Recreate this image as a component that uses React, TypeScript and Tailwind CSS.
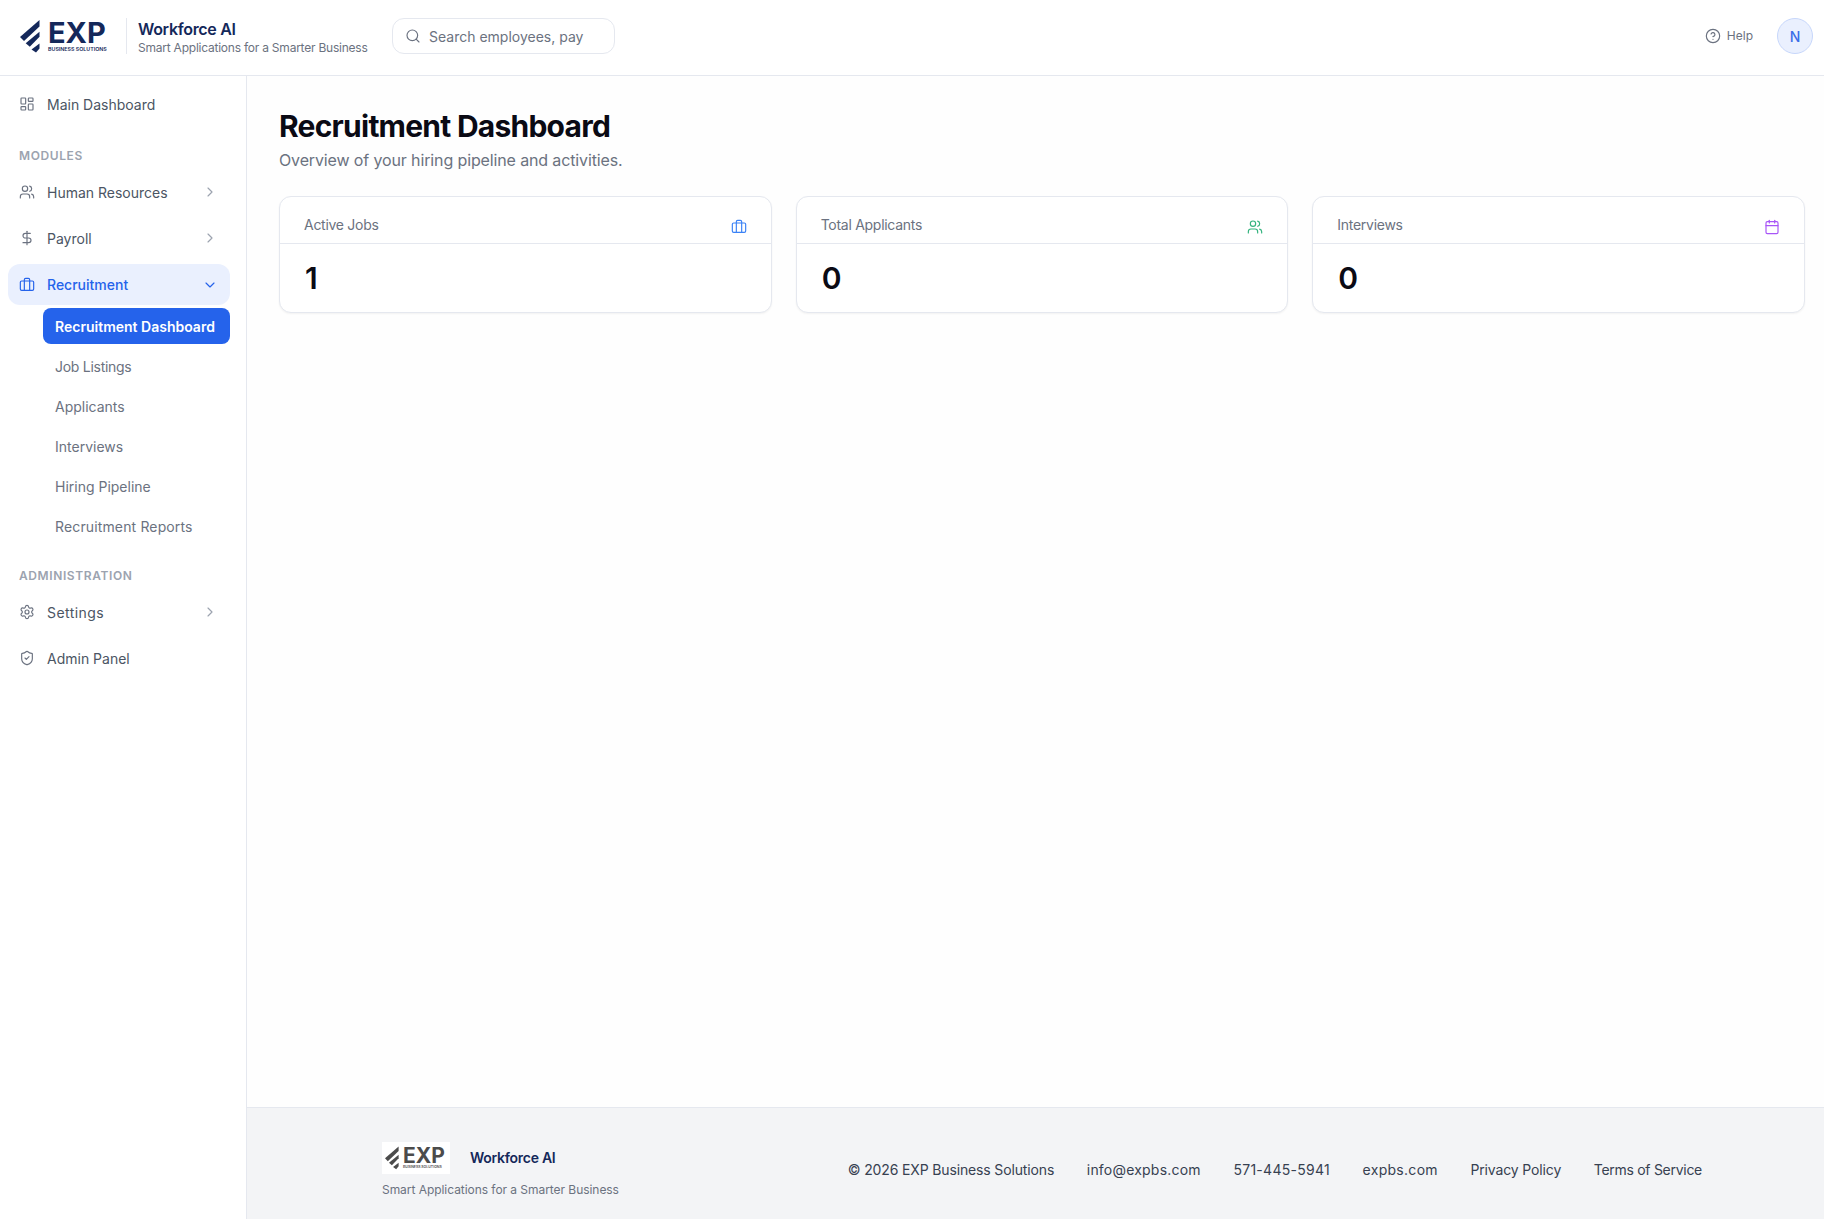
import React from "react";
import {
  LayoutDashboard, Users, DollarSign, Briefcase, ChevronRight, ChevronDown,
  Settings, ShieldCheck, Search, CircleHelp, Calendar,
} from "lucide-react";

function Stripes({ color, className }: { color: string; className: string }) {
  return (
    <svg viewBox="0 0 20 33" className={className} fill={color}>
      <polygon points="0,17 19.5,0 19.5,6.5 4,21" />
      <polygon points="5.7,23.3 19.5,11.7 19.5,16.7 9.8,26.7" />
      <polygon points="11.5,29.4 19.5,23.4 19.5,28.4 16,32.5" />
    </svg>
  );
}

function NavItem({ icon: Icon, label, chevron, track }: { icon: any; label: string; chevron?: boolean; track?: string }) {
  return (
    <div className="flex items-center h-[42px] pl-[11px] pr-[12px] rounded-xl text-[14px] text-[#4b5563]">
      <Icon className="w-4 h-4 mr-[12px] shrink-0 text-[#6b7280]" strokeWidth={1.75} />
      <span className={"flex-1 " + (track ?? "")}>{label}</span>
      {chevron && <ChevronRight className="w-4 h-4 text-[#9ca3af]" strokeWidth={1.75} />}
    </div>
  );
}

function SubItem({ label, active, track }: { label: string; active?: boolean; track?: string }) {
  return (
    <div className={"flex items-center h-[36px] pl-[12px] rounded-lg text-[14px] " + (track ?? "") + " " + (active ? "bg-[#2563eb] text-white font-semibold" : "text-[#6b7280]")}>
      {label}
    </div>
  );
}

function Card({ label, value, icon: Icon, color }: { label: string; value: string; icon: any; color: string }) {
  return (
    <div className="flex-1 bg-white border border-[#e5e8ef] rounded-xl shadow-xs h-[117px]">
      <div className="flex items-center justify-between h-[47px] pl-[24px] pr-[24px] border-b border-[#e5e8ef] pt-[8px]">
        <span className="text-[14px] text-[#6b7280] tracking-[-0.02em]">{label}</span>
        <Icon className={"w-4 h-4 mt-[6px] " + color} strokeWidth={1.75} />
      </div>
      <div className="pl-[25px] pt-[16px] text-[30px] leading-[36px] font-semibold text-[#0a0a14]">{value}</div>
    </div>
  );
}

export default function App() {
  return (
    <div className="h-[1219px] w-[1824px] flex flex-col bg-white overflow-hidden font-['Inter',sans-serif]">
      <header className="h-[76px] shrink-0 flex items-center border-b border-[#e5e8ef] pl-[20px] pr-[11px] pb-[3px]">
        <div className="flex items-center gap-[8px] w-[86px]">
          <Stripes color="#14285a" className="w-[20px] h-[33px] shrink-0" />
          <div className="flex flex-col shrink-0 text-[#14285a]">
            <span className="text-[29px] leading-[25px] font-bold">EXP</span>
            <span className="text-[5.3px] leading-[6px] font-semibold whitespace-nowrap mt-[1px]">BUSINESS SOLUTIONS</span>
          </div>
        </div>
        <div className="w-px h-[36px] bg-[#e5e8ef] ml-[20px] mr-[11px]" />
        <div className="flex flex-col w-[254px] pt-[2px]">
          <span className="text-[16px] leading-[22px] font-semibold text-[#14285a] tracking-[-0.02em]">Workforce AI</span>
          <span className="text-[12px] leading-[16px] text-[#6b7280] tracking-[-0.019em]">Smart Applications for a Smarter Business</span>
        </div>
        <div className="flex items-center h-[36px] w-[223px] border border-[#e5e8ef] rounded-xl pl-[12px] overflow-hidden">
          <Search className="w-4 h-4 text-[#6b7280] shrink-0" strokeWidth={1.75} />
          <span className="ml-[8px] text-[14px] text-[#6b7280] whitespace-nowrap">Search employees, pay</span>
        </div>
        <div className="flex-1" />
        <div className="flex items-center text-[12px] text-[#6b7280] gap-[6px] mr-[24px]">
          <CircleHelp className="w-4 h-4" strokeWidth={1.75} />
          <span>Help</span>
        </div>
        <div className="w-[36px] h-[36px] rounded-full bg-[#eaf0fe] border border-[#c7d7fb] flex items-center justify-center text-[14px] font-medium text-[#3b6ee8]">N</div>
      </header>
      <div className="flex-1 flex min-h-0">
        <aside className="w-[247px] shrink-0 border-r border-[#e5e8ef] pl-[8px] pr-[16px] pt-[7px] bg-white">
          <NavItem icon={LayoutDashboard} label="Main Dashboard" />
          <div className="pl-[11px] mt-[23px] mb-[7px] h-[16px] leading-[16px] text-[12px] font-semibold tracking-[0.05em] text-[#9ca3af]">MODULES</div>
          <div className="flex flex-col gap-[4px]">
            <NavItem icon={Users} label="Human Resources" chevron />
            <NavItem icon={DollarSign} label="Payroll" chevron />
          </div>
          <div className="mt-[5px] flex items-center h-[41px] pl-[11px] pr-[12px] rounded-xl bg-[#eaf0fe] text-[14px] text-[#2563eb] font-medium">
            <Briefcase className="w-4 h-4 mr-[12px]" strokeWidth={1.75} />
            <span className="flex-1">Recruitment</span>
            <ChevronDown className="w-4 h-4" strokeWidth={1.75} />
          </div>
          <div className="mt-[3px] ml-[35px] flex flex-col gap-[4px]">
            <SubItem label="Recruitment Dashboard" active />
            <SubItem label="Job Listings" track="tracking-[-0.02em]" />
            <SubItem label="Applicants" />
            <SubItem label="Interviews" />
            <SubItem label="Hiring Pipeline" />
            <SubItem label="Recruitment Reports" track="tracking-[0.01em]" />
          </div>
          <div className="pl-[11px] mt-[24px] mb-[7px] h-[16px] leading-[16px] text-[12px] font-semibold tracking-[0.05em] text-[#9ca3af]">ADMINISTRATION</div>
          <div className="flex flex-col gap-[4px]">
            <NavItem icon={Settings} label="Settings" chevron track="tracking-[0.03em]" />
            <NavItem icon={ShieldCheck} label="Admin Panel" />
          </div>
        </aside>
        <div className="flex-1 flex flex-col min-w-0">
          <main className="flex-1 pl-[32px] pr-[19px] pt-[32px] bg-[#fefefe]">
            <h1 className="text-[30px] leading-[36px] font-bold tracking-[-0.025em] text-[#0a0a14]">Recruitment Dashboard</h1>
            <p className="text-[16px] leading-[24px] text-[#6b7280] mt-[4px] tracking-[-0.008em]">Overview of your hiring pipeline and activities.</p>
            <div className="flex gap-[24px] mt-[24px]">
              <Card label="Active Jobs" value="1" icon={Briefcase} color="text-[#3b82f6]" />
              <Card label="Total Applicants" value="0" icon={Users} color="text-[#34b37e]" />
              <Card label="Interviews" value="0" icon={Calendar} color="text-[#a855f7]" />
            </div>
          </main>
          <footer className="h-[112px] shrink-0 bg-[#f3f4f6] border-t border-[#e5e8ef] flex items-center justify-between pl-[135px] pr-[122px] pt-[12px]">
            <div className="flex flex-col">
              <div className="flex items-center">
                <div className="flex items-center gap-[4px] w-[68px] h-[32px] bg-white pl-[3px]">
                  <Stripes color="#4b4b4b" className="w-[14px] h-[24px] shrink-0" />
                  <div className="flex flex-col text-[#4b4b4b]">
                    <span className="text-[21px] leading-[19px] font-bold">EXP</span>
                    <span className="text-[3.5px] leading-[5px] font-semibold whitespace-nowrap">BUSINESS SOLUTIONS</span>
                  </div>
                </div>
                <span className="ml-[20px] text-[14px] font-semibold text-[#14285a] tracking-[-0.02em]">Workforce AI</span>
              </div>
              <span className="text-[12px] leading-[16px] mt-[8px] text-[#6b7280] tracking-[-0.004em]">Smart Applications for a Smarter Business</span>
            </div>
            <div className="flex items-center gap-[32.6px] text-[14px] text-[#374151]">
              <span className="tracking-[-0.01em]">© 2026 EXP Business Solutions</span>
              <span className="tracking-[0.015em]">info@expbs.com</span>
              <span className="tracking-[0.02em]">571-445-5941</span>
              <span className="tracking-[0.02em]">expbs.com</span>
              <span className="tracking-[-0.01em]">Privacy Policy</span>
              <span className="tracking-[-0.02em]">Terms of Service</span>
            </div>
          </footer>
        </div>
      </div>
    </div>
  );
}
